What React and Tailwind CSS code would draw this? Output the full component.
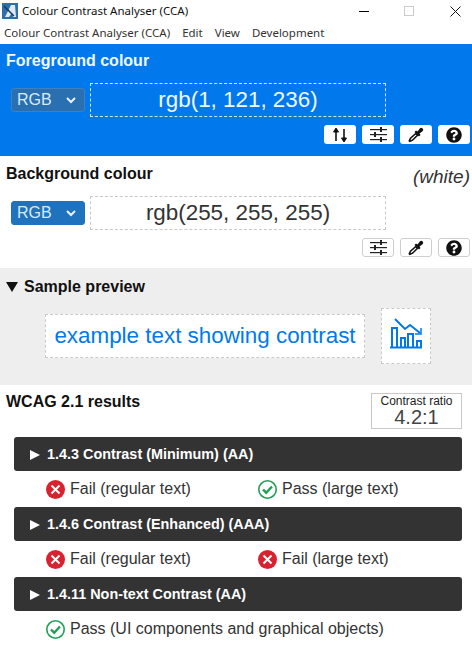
import { FaQuestionCircle } from 'react-icons/fa';

function SwapIcon() {
  return (
    <svg width="16" height="16" viewBox="0 0 16 16" fill="none" stroke="#111" strokeWidth="1.6">
      <path d="M4 14V2" />
      <path d="M1.5 5L4 1l2.5 4z" fill="#111" strokeWidth="1" />
      <path d="M12 2v12" />
      <path d="M9.5 11L12 15l2.5-4z" fill="#111" strokeWidth="1" />
    </svg>
  );
}

function SlidersIcon() {
  return (
    <svg width="17" height="15" viewBox="0 0 17 15" fill="#222">
      <rect x="0" y="2" width="17" height="1.2" />
      <rect x="0" y="7" width="17" height="1.2" />
      <rect x="0" y="12" width="17" height="1.2" />
      <rect x="10" y="0" width="2" height="5" />
      <rect x="4" y="5" width="2" height="5" />
      <rect x="10" y="10" width="2" height="5" />
    </svg>
  );
}

function DropperIcon() {
  return (
    <svg width="16" height="16" viewBox="0 0 16 16">
      <path d="M8 3.500l1.500 1L12 1.200a2 2 0 0 1 2.800 2.800L11.500 6.500l1 1.500-1.500 1.500L6.500 5z" fill="#111" />
      <path d="M7.800 6.500l1.700 1.700-5 5-2.700 1.200-.5-.5 1.200-2.700z" fill="#fff" stroke="#111" strokeWidth="1.600" />
    </svg>
  );
}

function ChartIcon() {
  return (
    <svg width="32" height="31" viewBox="0 0 32 31" fill="none" stroke="#0179ec" strokeWidth="2" className="mb-[5px]">
      <path d="M5 1l10 10 5-4 10 8" />
      <path d="M25 16h6v-6" strokeWidth="1.5" />
      <path d="M0 29.500h32" />
      <path d="M2 29V10h5v19M11 29V20h4v9M18 29V16h5v13M27 29v-6h4v6" />
    </svg>
  );
}

function FailIcon() {
  return (
    <svg width="19" height="19" viewBox="0 0 19 19" className="shrink-0">
      <circle cx="9.500" cy="9.500" r="9.500" fill="#d9222f" />
      <path d="M5.500 5.500l8 8M13.500 5.500l-8 8" stroke="#fff" strokeWidth="2" />
    </svg>
  );
}

function PassIcon() {
  return (
    <svg width="19" height="19" viewBox="0 0 19 19" fill="none" className="shrink-0">
      <circle cx="9.500" cy="9.500" r="8.700" stroke="#1f9d55" strokeWidth="1.6" />
      <path d="M5 9.500l3.200 3.200L14 6.500" stroke="#1f9d55" strokeWidth="2.4" />
    </svg>
  );
}

function ToolButton({ children, border }) {
  return (
    <div className={`w-[32px] h-[19px] bg-white rounded-[3px] flex items-center justify-center ${border ? 'border border-[#cfcfcf]' : ''}`}>
      {children}
    </div>
  );
}

function Tools({ swap, border }) {
  return (
    <div className="flex justify-end gap-[6px] pr-[2px]">
      {swap && <ToolButton border={border}><SwapIcon /></ToolButton>}
      <ToolButton border={border}><SlidersIcon /></ToolButton>
      <ToolButton border={border}><DropperIcon /></ToolButton>
      <ToolButton border={border}><FaQuestionCircle size={16} color="#111" /></ToolButton>
    </div>
  );
}

function ColourRow({ bg, border, text, value }) {
  return (
    <div className="flex items-center pl-[11px] gap-[5px]">
      <div className={`w-[74px] h-[24px] rounded-[3px] border ${bg} text-[#d8ecfd] text-[16px] pl-[5px] pr-[8px] flex items-center justify-between`}>
        RGB
        <svg width="10" height="7" viewBox="0 0 10 7" fill="none" stroke="#e8f3fd" strokeWidth="2">
          <path d="M1 1l4 4 4-4" />
        </svg>
      </div>
      <div className={`w-[296px] h-[34px] border border-dashed ${border} ${text} text-[22.4px] flex items-center justify-center`}>
        {value}
      </div>
    </div>
  );
}

function Criterion({ title, children }) {
  return (
    <div>
      <div className="h-[34px] mx-[14px] w-[448px] bg-[#333333] rounded-[3px] text-white font-bold text-[14.4px] flex items-center pl-[16px] pt-[1px] gap-[7px]">
        <svg width="10" height="10" viewBox="0 0 10 10" fill="#fff"><path d="M0 0l10 5-10 5z" /></svg>
        {title}
      </div>
      <div className="h-[36px] flex items-center text-[16px] text-[#333]">{children}</div>
    </div>
  );
}

function Result({ pass, label, className }) {
  return (
    <div className={`flex items-center gap-[5px] ${className}`}>
      {pass ? <PassIcon /> : <FailIcon />}
      <span>{label}</span>
    </div>
  );
}

export default function App() {
  return (
    <div className="w-[472px] h-[645px] overflow-hidden bg-white font-['Liberation_Sans',Arial,sans-serif]">
      <div className="h-[22px] flex items-center pl-[2px] text-[11.5px] text-[#111] font-['Noto_Sans',sans-serif]">
        <svg width="16" height="16" viewBox="0 0 16 16" className="shrink-0">
          <rect width="16" height="16" fill="#2f6ea8" />
          <path d="M3 14L9 2h4l1 12h-3l-1-4-3 4z" fill="#dfe9f2" />
          <path d="M2 3l10 10" stroke="#16395c" strokeWidth="1.5" />
        </svg>
        <span className="ml-[4px]">Colour Contrast Analyser (CCA)</span>
        <div className="ml-auto flex items-center">
          <div className="w-[10px] h-[1px] bg-black mr-[35px]" />
          <div className="w-[10px] h-[10px] border border-[#cccccc] mr-[36px]" />
          <svg width="11" height="11" viewBox="0 0 11 11" className="mr-[11px]" stroke="#111" strokeWidth="1">
            <path d="M.5.5l10 10M10.500.5l-10 10" />
          </svg>
        </div>
      </div>
      <div className="h-[22px] flex items-center pl-[4px] gap-[12px] text-[11.5px] text-[#333] font-['Noto_Sans',sans-serif]">
        <span>Colour Contrast Analyser (CCA)</span>
        <span>Edit</span>
        <span>View</span>
        <span>Development</span>
      </div>

      <section className="h-[112px] bg-[#0179ec]">
        <h2 className="h-[39px] pl-[6px] pt-[6px] text-[16px] leading-[22px] font-bold text-[#f1f8ff]">Foreground colour</h2>
        <ColourRow bg="bg-[#2a6fb0] border-[#3f80bd]" border="border-[#cfe6fb]" text="text-[#f1f8ff]" value="rgb(1, 121, 236)" />
        <div className="mt-[8px]"><Tools swap /></div>
      </section>

      <section className="h-[112px] relative">
        <h2 className="h-[40px] pl-[6px] pt-[7px] text-[16px] leading-[22px] font-bold text-[#111]">Background colour</h2>
        <span className="absolute right-[2px] top-[7px] text-[19px] italic text-[#333]">(white)</span>
        <ColourRow bg="bg-[#1f72bd] border-[#1f72bd]" border="border-[#c9c9c9]" text="text-[#333]" value="rgb(255, 255, 255)" />
        <div className="mt-[8px]"><Tools border /></div>
      </section>

      <section className="h-[117px] bg-[#eeeeee]">
        <div className="h-[40px] pl-[6px] flex items-center gap-[6px] font-bold text-[16px] text-[#111] pb-[2px]">
          <svg width="12" height="10" viewBox="0 0 12 10" fill="#111"><path d="M0 0h12L6 10z" /></svg>
          Sample preview
        </div>
        <div className="flex items-center pl-[45px] gap-[16px]">
          <div className="w-[320px] h-[44px] bg-white border border-dashed border-[#c9c9c9] text-[#0179ec] text-[22.4px] flex items-center justify-center">
            example text showing contrast
          </div>
          <div className="w-[50px] h-[56px] bg-white border border-dashed border-[#c9c9c9] flex items-center justify-center">
            <ChartIcon />
          </div>
        </div>
      </section>

      <section className="h-[52px] relative">
        <h2 className="pl-[6px] pt-[6px] text-[16px] leading-[21px] font-bold text-[#111]">WCAG 2.1 results</h2>
        <div className="absolute left-[371px] top-[8px] w-[91px] h-[36px] border border-[#c9c9c9] text-center text-[#222]">
          <div className="text-[12px] leading-[13px] mt-[1px]">Contrast ratio</div>
          <div className="text-[20px] leading-[19px] text-[#444]">4.2:1</div>
        </div>
      </section>

      <Criterion title="1.4.3 Contrast (Minimum) (AA)">
        <Result label="Fail (regular text)" className="ml-[46px] w-[212px]" />
        <Result pass label="Pass (large text)" />
      </Criterion>
      <Criterion title="1.4.6 Contrast (Enhanced) (AAA)">
        <Result label="Fail (regular text)" className="ml-[46px] w-[212px]" />
        <Result label="Fail (large text)" />
      </Criterion>
      <Criterion title="1.4.11 Non-text Contrast (AA)">
        <Result pass label="Pass (UI components and graphical objects)" className="ml-[46px]" />
      </Criterion>
    </div>
  );
}
